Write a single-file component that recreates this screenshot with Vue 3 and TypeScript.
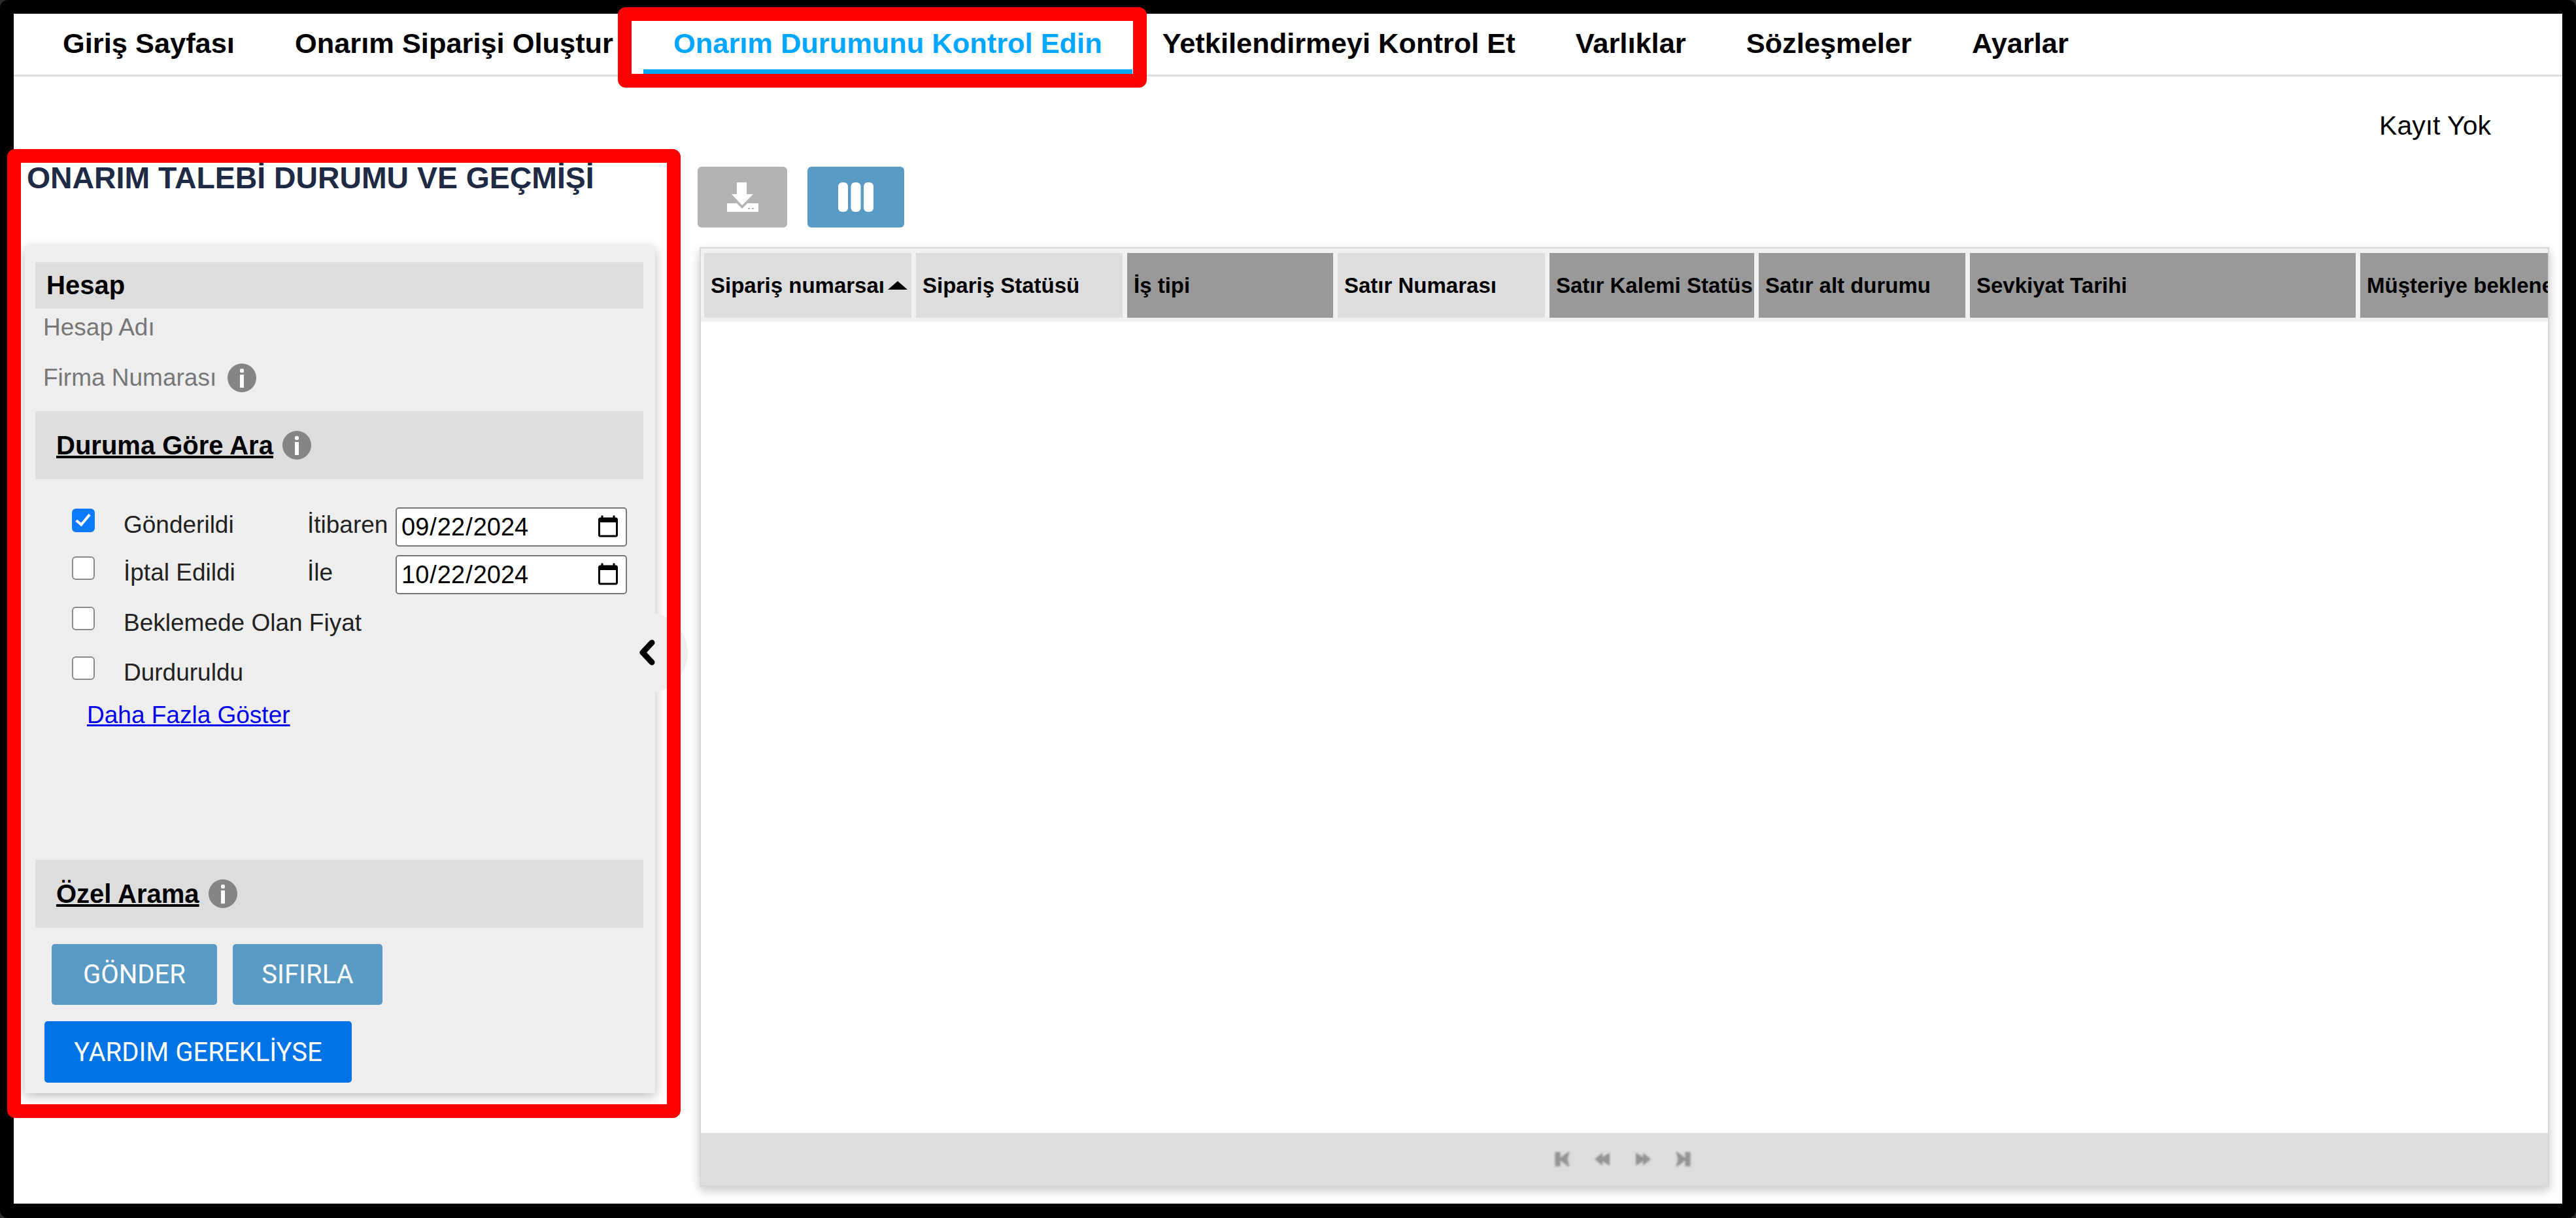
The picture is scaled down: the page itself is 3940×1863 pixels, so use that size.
<script setup lang="ts">
import { ref } from 'vue';

const tabs = [
  'Giriş Sayfası',
  'Onarım Siparişi Oluştur',
  'Onarım Durumunu Kontrol Edin',
  'Yetkilendirmeyi Kontrol Et',
  'Varlıklar',
  'Sözleşmeler',
  'Ayarlar'
];
const activeTab = 'Onarım Durumunu Kontrol Edin';

const filters = ref([
  { label: 'Gönderildi', checked: true, dateLabel: 'İtibaren', date: '2024-09-22' },
  { label: 'İptal Edildi', checked: false, dateLabel: 'İle', date: '2024-10-22' },
  { label: 'Beklemede Olan Fiyat', checked: false, dateLabel: '', date: '' },
  { label: 'Durduruldu', checked: false, dateLabel: '', date: '' }
]);

// sütun genişlikleri
const columns = [
  { title: 'Sipariş numarsaı', width: 317, dark: false, sorted: true },
  { title: 'Sipariş Statüsü', width: 316, dark: false, sorted: false },
  { title: 'İş tipi', width: 315, dark: true, sorted: false },
  { title: 'Satır Numarası', width: 317, dark: false, sorted: false },
  { title: 'Satır Kalemi Statüs', width: 313, dark: true, sorted: false },
  { title: 'Satır alt durumu', width: 316, dark: true, sorted: false },
  { title: 'Sevkiyat Tarihi', width: 590, dark: true, sorted: false },
  { title: 'Müşteriye beklenen', width: 320, dark: true, sorted: false }
];
</script>

<template>
  <div class="screen">
    <div class="frame">
      <nav class="tabs">
        <a v-for="tab in tabs" :key="tab" class="tab" :class="{ active: tab === activeTab }">{{ tab }}</a>
      </nav>

      <div class="records">Kayıt Yok</div>

      <div class="content">
        <section class="side">
          <h2 class="title">ONARIM TALEBİ DURUMU VE GEÇMİŞİ</h2>

          <div class="panel">
            <div class="bar bar-account">Hesap</div>
            <div class="field first">Hesap Adı</div>
            <div class="field">
              Firma Numarası
              <svg class="info" viewBox="0 0 44 44"><circle cx="22" cy="22" r="22" fill="#858585" /><rect x="19" y="8" width="6" height="6" rx="2" fill="#fff" /><rect x="19" y="17" width="6" height="20" fill="#fff" /></svg>
            </div>

            <div class="bar bar-search">
              <span class="bar-link">Duruma Göre Ara</span>
              <svg class="info" viewBox="0 0 44 44"><circle cx="22" cy="22" r="22" fill="#858585" /><rect x="19" y="8" width="6" height="6" rx="2" fill="#fff" /><rect x="19" y="17" width="6" height="20" fill="#fff" /></svg>
            </div>

            <div class="filters">
              <template v-for="item in filters" :key="item.label">
                <input v-model="item.checked" type="checkbox" class="check" />
                <span class="filter-label" :class="{ wide: !item.date }">{{ item.label }}</span>
                <template v-if="item.date">
                  <span class="filter-label">{{ item.dateLabel }}</span>
                  <input v-model="item.date" type="date" class="date" />
                </template>
              </template>
            </div>
            <a class="more">Daha Fazla Göster</a>

            <div class="bar bar-search bar-custom">
              <span class="bar-link">Özel Arama</span>
              <svg class="info" viewBox="0 0 44 44"><circle cx="22" cy="22" r="22" fill="#858585" /><rect x="19" y="8" width="6" height="6" rx="2" fill="#fff" /><rect x="19" y="17" width="6" height="20" fill="#fff" /></svg>
            </div>

            <div class="actions">
              <button class="btn send">GÖNDER</button>
              <button class="btn reset">SIFIRLA</button>
            </div>
            <button class="btn help">YARDIM GEREKLİYSE</button>

            <div class="toggle">
              <svg viewBox="0 0 26 40" class="chevron"><path d="M20 5 6 20l14 15" fill="none" stroke="#000" stroke-width="9" stroke-linecap="round" stroke-linejoin="round" /></svg>
            </div>
          </div>
        </section>

        <section class="main">
          <div class="toolbar">
            <button class="tool export">
              <svg viewBox="0 0 48 45" class="tool-icon">
                <path d="M15 0h15v18h10L23 35 7 18h8z" fill="#fff" />
                <path d="M0 32h15l8 8 8-8h17v13H0z" fill="#fff" />
                <rect x="32" y="39" width="3" height="2" fill="#b3b3b3" />
                <rect x="38" y="39" width="3" height="2" fill="#b3b3b3" />
              </svg>
            </button>
            <button class="tool cols">
              <svg viewBox="0 0 54 45" class="tool-icon cols-icon">
                <rect x="0" y="0" width="15" height="45" rx="6" fill="#fff" />
                <rect x="19.5" y="0" width="15" height="45" rx="6" fill="#fff" />
                <rect x="39" y="0" width="15" height="45" rx="6" fill="#fff" />
              </svg>
            </button>
          </div>

          <div class="grid">
            <div class="grid-head">
              <div
                v-for="col in columns"
                :key="col.title"
                class="cell"
                :class="{ dark: col.dark }"
                :style="{ width: col.width + 'px' }"
              >
                <span class="cell-text">{{ col.title }}</span>
                <span v-if="col.sorted" class="sort"></span>
              </div>
            </div>
            <div class="grid-body"></div>
            <div class="pager">
              <svg viewBox="0 0 24 22" class="page-icon"><path d="M0 0h8v9L20 0h2l-3 11 3 11h-2L8 13v9H0z" fill="#949494" /></svg>
              <svg viewBox="0 0 25 22" class="page-icon"><path d="M0 11 12 1v7l11-7v20l-11-7v7z" fill="#949494" /></svg>
              <svg viewBox="0 0 25 22" class="page-icon"><path d="M25 11 13 1v7L2 1v20l11-7v7z" fill="#949494" /></svg>
              <svg viewBox="0 0 24 22" class="page-icon"><path d="M24 0h-8v9L4 0H2l3 11-3 11h2l12-9v9h8z" fill="#949494" /></svg>
            </div>
          </div>
        </section>
      </div>
    </div>

    <div class="mark mark-tab"></div>
    <div class="mark mark-side"></div>
  </div>
</template>

<style>
html,
body {
  margin: 0;
  background: #2b2b2b;
}
</style>

<style scoped>
.screen {
  position: relative;
  width: 3940px;
  height: 1863px;
  overflow: hidden;
  font-family: "Liberation Sans", Arial, sans-serif;
  color: #000;
}
.frame {
  box-sizing: border-box;
  width: 100%;
  height: 100%;
  background: #fff;
  border: solid #000;
  border-width: 21px 21px 22px 21px;
  border-radius: 12px;
  display: flex;
  flex-direction: column;
}
.tabs {
  display: flex;
  box-sizing: border-box;
  height: 96px;
  padding-left: 29px;
  border-bottom: 3px solid #ddd;
  flex: none;
}
.tab {
  padding: 21px 46px 0;
  font-size: 43.4px;
  line-height: 48px;
  font-weight: 700;
  white-space: nowrap;
}
.tab.active {
  color: #00a6ff;
  border-bottom: 7px solid #00a6ff;
  height: 92px;
  box-sizing: border-box;
}
.records {
  flex: none;
  text-align: right;
  font-size: 41px;
  line-height: 46px;
  margin-top: 52px;
  padding-right: 109px;
}
.content {
  flex: 1;
  display: flex;
  margin-top: 34px;
}
.side {
  width: 1046px;
  flex: none;
  padding-left: 17px;
  box-sizing: border-box;
}
.title {
  margin: 0 0 0 3px;
  height: 128px;
  font-size: 46.4px;
  line-height: 46px;
  font-weight: 700;
  color: #1f2a44;
  white-space: nowrap;
}
.panel {
  position: relative;
  box-sizing: border-box;
  width: 964px;
  height: 1295px;
  padding: 24px 18px 0 16px;
  background: #eee;
  box-shadow: 0 4px 16px rgba(0, 0, 0, 0.28);
}
.bar {
  background: #ddd;
  display: flex;
  align-items: center;
}
.bar-account {
  height: 71px;
  padding-left: 17px;
  font-size: 40px;
  font-weight: 700;
}
.field {
  display: flex;
  align-items: center;
  gap: 17px;
  height: 44px;
  padding-left: 12px;
  margin-top: 33px;
  font-size: 37px;
  color: #777;
}
.field.first {
  margin-top: 7px;
}
.info {
  width: 44px;
  height: 44px;
  flex: none;
}
.bar-search {
  height: 104px;
  margin-top: 29px;
  padding-left: 32px;
  gap: 14px;
}
.bar-custom {
  margin-top: 200px;
}
.bar-link {
  font-size: 40px;
  font-weight: 700;
  text-decoration: underline;
}
.filters {
  display: grid;
  grid-template-columns: 79px 281px 135px 354px;
  grid-template-rows: 60px 60px 68px 58px;
  row-gap: 13px;
  align-items: center;
  margin-top: 43px;
  padding-left: 56px;
}
.check {
  appearance: none;
  position: relative;
  box-sizing: border-box;
  width: 35px;
  height: 36px;
  margin: 0 0 20px;
  background: #fff;
  border: 2.5px solid #8a8a8a;
  border-radius: 6px;
}
.check:checked {
  background: #0a7bff;
  border-color: #0a7bff;
}
.check:checked::after {
  content: "";
  position: absolute;
  left: 9px;
  top: 2px;
  width: 8px;
  height: 18px;
  border: solid #fff;
  border-width: 0 4px 4px 0;
  transform: rotate(40deg);
}
.filter-label {
  font-size: 37px;
  color: #222;
  margin-bottom: 6px;
}
.filter-label.wide {
  grid-column: span 3;
}
.date {
  box-sizing: border-box;
  width: 354px;
  height: 60px;
  padding: 0 6px;
  font-family: "Liberation Sans", Arial, sans-serif;
  font-size: 38px;
  border: 2.5px solid #767676;
  border-radius: 5px;
  background: #fff;
}
.more {
  display: block;
  margin: 12px 0 0 79px;
  font-size: 37px;
  line-height: 42px;
  color: #00e;
  text-decoration: underline;
}
.actions {
  display: flex;
  gap: 24px;
  margin: 25px 0 0 25px;
}
.btn {
  display: block;
  border: 0;
  border-radius: 5px;
  color: #fff;
  font-family: Roboto, Arial, sans-serif;
  font-size: 40px;
  font-weight: 400;
  padding: 0;
}
.send {
  width: 253px;
  height: 93px;
  background: #5a9bc5;
}
.reset {
  width: 229px;
  height: 93px;
  background: #5a9bc5;
}
.help {
  width: 470px;
  height: 94px;
  margin: 25px 0 0 14px;
  background: #0073e6;
}
.toggle {
  position: absolute;
  left: 939px;
  top: 560px;
  width: 75px;
  height: 123px;
  background: #eee;
  border-radius: 0 62px 62px 0;
}
.chevron {
  position: absolute;
  left: 0;
  top: 41px;
  width: 26px;
  height: 40px;
}
.main {
  flex: 1;
  min-width: 0;
  padding-left: 0;
}
.toolbar {
  display: flex;
  gap: 31px;
  margin-top: 6px;
}
.tool {
  height: 93px;
  border: 0;
  border-radius: 6px;
  padding: 0;
  display: flex;
  align-items: center;
  justify-content: center;
}
.export {
  width: 137px;
  background: #b3b3b3;
}
.cols {
  width: 148px;
  background: #5a9bc5;
}
.tool-icon {
  width: 48px;
  height: 45px;
}
.cols-icon {
  width: 54px;
  height: 45px;
}
.grid {
  box-sizing: border-box;
  width: 2829px;
  height: 1437px;
  margin: 30px 0 0 3px;
  background: #fff;
  border: 2px solid #d8d8d8;
  box-shadow: 0 6px 14px rgba(0, 0, 0, 0.22);
  display: flex;
  flex-direction: column;
  overflow: hidden;
}
.grid-head {
  display: flex;
  gap: 7px;
  flex: none;
  padding: 7px 0 6px 5px;
  background: #f1f1f1;
  overflow: hidden;
}
.cell {
  flex: none;
  box-sizing: border-box;
  height: 99px;
  padding-left: 10px;
  display: flex;
  align-items: center;
  background: #ddd;
  font-size: 33px;
  font-weight: 700;
  white-space: nowrap;
  overflow: hidden;
}
.cell.dark {
  background: #999;
}
.sort {
  flex: none;
  width: 0;
  height: 0;
  margin-left: 5px;
  border-left: 15px solid transparent;
  border-right: 15px solid transparent;
  border-bottom: 13px solid #000;
}
.grid-body {
  flex: 1;
}
.pager {
  flex: none;
  height: 80px;
  background: #ddd;
  display: flex;
  align-items: center;
  padding-left: 1306px;
  gap: 36px;
}
.page-icon {
  width: 25px;
  height: 22px;
  filter: blur(1.5px);
}
.mark {
  position: absolute;
  box-sizing: border-box;
  border: 21px solid #f00;
  border-radius: 12px;
  pointer-events: none;
}
.mark-tab {
  left: 945px;
  top: 11px;
  width: 809px;
  height: 123px;
}
.mark-side {
  left: 11px;
  top: 228px;
  width: 1030px;
  height: 1482px;
}
</style>
